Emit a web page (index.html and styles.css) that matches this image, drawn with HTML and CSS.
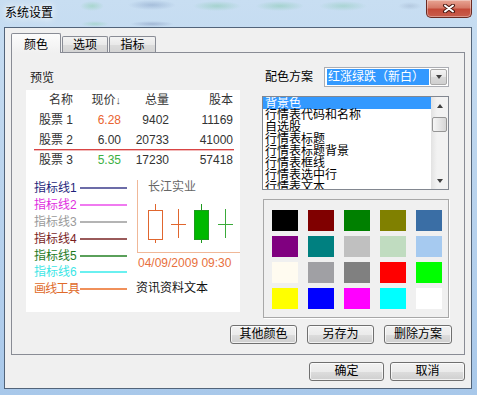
FILE: index.html
```html
<!DOCTYPE html>
<html lang="zh-CN">
<head>
    <meta charset="UTF-8">
    <title>系统设置</title>
    <link rel="stylesheet" href="styles.css">
</head>
<body>
    <div class="window">
        <div class="titlebar">
            <span class="title">系统设置</span>
            <button class="close" type="button">
                <svg width="14" height="9" viewBox="0 0 14 9">
                    <path d="M3 1.5 L11 7.5 M11 1.5 L3 7.5" stroke="#4a1810" stroke-width="4" stroke-linecap="round"/>
                    <path d="M3 1.5 L11 7.5 M11 1.5 L3 7.5" stroke="#fff" stroke-width="2" stroke-linecap="round"/>
                </svg>
            </button>
        </div>

        <div class="client">
            <div class="tabs">
                <div class="tab active">颜色</div>
                <div class="tab">选项</div>
                <div class="tab tab-last">指标</div>
            </div>

            <div class="panel">
                <div class="panel-body">
                    <!-- 左侧预览 -->
                    <div class="preview-col">
                        <div class="group-label">预览</div>
                        <div class="preview">
                            <div class="quote">
                                <span>名称</span><span>现价<span class="sort">↓</span></span><span>总量</span><span>股本</span>
                            </div>
                            <div class="quote">
                                <span>股票 1</span><span class="up">6.28</span><span>9402</span><span>11169</span>
                            </div>
                            <div class="quote tight">
                                <span>股票 2</span><span>6.00</span><span>20733</span><span>41000</span>
                            </div>
                            <div class="sep"></div>
                            <div class="quote">
                                <span>股票 3</span><span class="down">5.35</span><span>17230</span><span>57418</span>
                            </div>

                            <div class="lower">
                                <div class="ind-list">
                                    <span class="ind-name ind1">指标线1</span><span class="ind-line ind1"></span>
                                    <span class="ind-name ind2">指标线2</span><span class="ind-line ind2"></span>
                                    <span class="ind-name ind3">指标线3</span><span class="ind-line ind3"></span>
                                    <span class="ind-name ind4">指标线4</span><span class="ind-line ind4"></span>
                                    <span class="ind-name ind5">指标线5</span><span class="ind-line ind5"></span>
                                    <span class="ind-name ind6">指标线6</span><span class="ind-line ind6"></span>
                                    <span class="ind-name ind7 narrow">画线工具</span><span class="ind-line ind7"></span>
                                </div>
                                <div class="chart">
                                    <div class="axis">
                                        <div class="chart-title">长江实业</div>
                                        <svg class="candles" width="102" height="58" viewBox="0 0 102 58">
                                            <g stroke="#e0662e" fill="none">
                                                <line x1="17.5" y1="10" x2="17.5" y2="49"/>
                                                <rect x="10.5" y="16.5" width="14" height="29" fill="#fff"/>
                                                <line x1="40.5" y1="15" x2="40.5" y2="44"/>
                                                <line x1="33" y1="30.5" x2="48" y2="30.5"/>
                                            </g>
                                            <g stroke="#1e9a1e">
                                                <line x1="63.5" y1="10" x2="63.5" y2="49"/>
                                                <rect x="56.5" y="16.5" width="14" height="29" fill="#00b800"/>
                                                <line x1="87.5" y1="15" x2="87.5" y2="44" stroke="#3aaa3a"/>
                                                <line x1="80" y1="30.5" x2="95" y2="30.5" stroke="#3aaa3a"/>
                                            </g>
                                        </svg>
                                    </div>
                                    <div class="date">04/09/2009 09:30</div>
                                    <div class="news">资讯资料文本</div>
                                </div>
                            </div>
                        </div>
                    </div>

                    <!-- 右侧配色方案 -->
                    <div class="scheme-col">
                        <div class="scheme-row">
                            <span class="scheme-label">配色方案</span>
                            <div class="combo">
                                <span class="combo-value">红涨绿跌（新白）</span>
                                <span class="combo-btn"><i class="arrow-down"></i></span>
                            </div>
                        </div>

                        <div class="listbox">
                            <div class="items">
                                <div class="item sel">背景色</div>
                                <div class="item">行情表代码和名称</div>
                                <div class="item">自选股</div>
                                <div class="item">行情表标题</div>
                                <div class="item">行情表标题背景</div>
                                <div class="item">行情表框线</div>
                                <div class="item">行情表选中行</div>
                                <div class="item">行情表文本</div>
                            </div>
                            <div class="vscroll">
                                <span class="sb-btn"><i class="arrow-up"></i></span>
                                <span class="thumb"></span>
                                <span class="sb-space"></span>
                                <span class="sb-btn"><i class="arrow-down"></i></span>
                            </div>
                        </div>

                        <div class="palette">
                            <span class="swatch" style="background:#000000"></span>
                            <span class="swatch" style="background:#800000"></span>
                            <span class="swatch" style="background:#008000"></span>
                            <span class="swatch" style="background:#808000"></span>
                            <span class="swatch" style="background:#3a6ea5"></span>
                            <span class="swatch" style="background:#800080"></span>
                            <span class="swatch" style="background:#008080"></span>
                            <span class="swatch" style="background:#c0c0c0"></span>
                            <span class="swatch" style="background:#c0dcc0"></span>
                            <span class="swatch" style="background:#a6caf0"></span>
                            <span class="swatch" style="background:#fffbf0"></span>
                            <span class="swatch" style="background:#a0a0a4"></span>
                            <span class="swatch" style="background:#808080"></span>
                            <span class="swatch" style="background:#ff0000"></span>
                            <span class="swatch" style="background:#00ff00"></span>
                            <span class="swatch" style="background:#ffff00"></span>
                            <span class="swatch" style="background:#0000ff"></span>
                            <span class="swatch" style="background:#ff00ff"></span>
                            <span class="swatch" style="background:#00ffff"></span>
                            <span class="swatch" style="background:#ffffff"></span>
                        </div>
                    </div>
                </div>

                <div class="panel-buttons">
                    <button class="btn w-a" type="button">其他颜色</button>
                    <button class="btn w-b" type="button">另存为</button>
                    <button class="btn w-c" type="button">删除方案</button>
                </div>
            </div>

            <div class="dialog-buttons">
                <button class="btn w-d" type="button">确定</button>
                <button class="btn w-d" type="button">取消</button>
            </div>
        </div>
    </div>
</body>
</html>
```

FILE: styles.css
```css
* {
    box-sizing: border-box;
}

body {
    margin: 0;
    width: 477px;
    height: 395px;
    overflow: hidden;
    font-family: "Liberation Sans", "Noto Sans CJK SC", sans-serif;
    font-size: 12px;
    color: #1a1a1a;
    background: linear-gradient(to bottom, #c8def2, #bcd5ee 40%, #b0cdec 80%, #a8c8ea);
}

.window {
    height: 395px;
    display: flex;
    flex-direction: column;
}

/* 标题栏 (玻璃效果) */
.titlebar {
    flex: none;
    height: 27px;
    display: flex;
    align-items: flex-start;
    padding: 0 5px;
    background:
        radial-gradient(ellipse 12px 5px at 92px 6px, rgba(110, 200, 140, 0.35), transparent),
        radial-gradient(ellipse 24px 5px at 152px 5px, rgba(80, 110, 160, 0.28), transparent),
        radial-gradient(ellipse 24px 5px at 217px 6px, rgba(100, 190, 140, 0.35), transparent),
        radial-gradient(ellipse 24px 5px at 280px 6px, rgba(100, 190, 140, 0.35), transparent),
        radial-gradient(ellipse 24px 5px at 343px 6px, rgba(100, 190, 140, 0.3), transparent),
        radial-gradient(ellipse 12px 4px at 410px 6px, rgba(110, 130, 160, 0.22), transparent),
        radial-gradient(ellipse 14px 3px at 95px 24px, rgba(110, 200, 140, 0.3), transparent),
        radial-gradient(ellipse 22px 3px at 152px 24px, rgba(80, 100, 150, 0.3), transparent);
}

.title {
    margin-top: 6px;
    line-height: 14px;
    color: #000;
    text-shadow: 0 0 6px #fff, 0 0 10px rgba(255, 255, 255, 0.9);
}

.close {
    margin-left: auto;
    width: 46px;
    height: 18px;
    padding: 0;
    display: flex;
    align-items: center;
    justify-content: center;
    border: 1px solid #6a2a22;
    border-top: none;
    border-radius: 0 0 5px 5px;
    background: linear-gradient(to bottom, #e8a594 0%, #d67a68 45%, #c44a38 55%, #c85d4c 100%);
    box-shadow: inset 0 0 0 1px rgba(255, 255, 255, 0.35);
}

/* 客户区 */
.client {
    flex: none;
    height: 362px;
    margin: 0 5px 0 4px;
    padding: 5px 6px 0 6px;
    border: 1px solid #52647a;
    background: #f0f0f0;
}

.tabs {
    display: flex;
    align-items: flex-end;
    height: 19px;
}

.tab {
    width: 46px;
    height: 16px;
    margin-left: 1px;
    padding-top: 1px;
    line-height: 14px;
    text-align: center;
    color: #000;
    border: 1px solid #898c95;
    border-bottom: none;
    border-radius: 2px 2px 0 0;
    background: linear-gradient(to bottom, #f3f3f3, #e9e9e9 50%, #dcdcdc 51%, #d4d4d4);
}

.tab-last {
    width: 47px;
}

.tab.active {
    position: relative;
    z-index: 1;
    width: 50px;
    height: 20px;
    margin-left: 0;
    margin-bottom: -1px;
    padding-top: 4px;
    background: linear-gradient(to bottom, #fcfcfc, #f0f0f0);
}

.tab.active + .tab {
    margin-left: 1px;
}

.panel {
    width: 454px;
    height: 303px;
    padding: 0 12px 0 14px;
    border: 1px solid #898c95;
    background: #f0f0f0;
}

.panel-body {
    display: flex;
    height: 264px;
}

/* 预览 */
.preview-col {
    width: 214px;
    flex: none;
}

.group-label {
    margin: 18px 0 5px 4px;
    line-height: 14px;
}

.preview {
    height: 222px;
    background: #fff;
    color: #333;
}

.quote {
    display: grid;
    grid-template-columns: 47px 48px 48px 64px;
    height: 20px;
    align-items: center;
    text-align: right;
    line-height: 14px;
}

.quote.tight {
    height: 19px;
}

.sort {
    font-size: 11px;
    color: #555;
}

.up {
    color: #ea6430;
}

.down {
    color: #3cb043;
}

.sep {
    height: 1px;
    margin: 0 6px 0 8px;
    background: #d94444;
    box-shadow: 0 1px 0 rgba(230, 120, 120, 0.5);
}

.lower {
    display: flex;
    margin-top: 10px;
    padding-left: 8px;
}

.ind-list {
    display: grid;
    grid-template-columns: 46px 47px;
    grid-auto-rows: 16.8px;
    align-items: center;
}

.ind-name {
    white-space: nowrap;
    line-height: 14px;
}

.ind-name.narrow {
    letter-spacing: -0.7px;
}

.ind-line {
    height: 2px;
}

.ind-name.ind1 { color: #1f1f7a; }
.ind-line.ind1 { background: #6c6ca8; }
.ind-name.ind2 { color: #e02ee0; }
.ind-line.ind2 { background: #f07af0; }
.ind-name.ind3 { color: #9a9a9a; }
.ind-line.ind3 { background: #b4b4b4; }
.ind-name.ind4 { color: #7a1e1e; }
.ind-line.ind4 { background: #9a5a5a; }
.ind-name.ind5 { color: #1e7a1e; }
.ind-line.ind5 { background: #5aa05a; }
.ind-name.ind6 { color: #3ce6e6; }
.ind-line.ind6 { background: #6af0f0; }
.ind-name.ind7 { color: #e06a2a; }
.ind-line.ind7 { background: #f0905a; }

.chart {
    width: 103px;
    margin-left: 10px;
}

.axis {
    height: 73px;
    border-left: 1px solid #f0b898;
    border-bottom: 1px solid #f0b898;
}

.chart-title {
    padding-left: 10px;
    line-height: 14px;
    color: #666;
}

.candles {
    display: block;
}

.date {
    margin-top: 2px;
    padding-left: 1px;
    line-height: 16px;
    color: #e8703c;
}

.news {
    margin: 9px 0 0 -1px;
    line-height: 17px;
    color: #111;
}

/* 配色方案 */
.scheme-col {
    width: 187px;
    margin-left: 22px;
    padding-top: 14px;
}

.scheme-row {
    display: flex;
    align-items: center;
    height: 20px;
}

.scheme-label {
    margin-left: 3px;
    line-height: 14px;
    color: #000;
}

.combo {
    display: flex;
    width: 125px;
    height: 20px;
    margin-left: auto;
    padding: 1px 1px 1px 2px;
    border: 1px solid #abadb3;
    background: #fff;
}

.combo-value {
    flex: 1;
    padding-left: 1px;
    line-height: 16px;
    white-space: nowrap;
    overflow: hidden;
    color: #fff;
    background: #3399ff;
}

.combo-btn {
    width: 17px;
    margin-left: 1px;
    display: flex;
    align-items: center;
    justify-content: center;
    border: 1px solid #a9a9a9;
    border-radius: 2px;
    background: linear-gradient(to bottom, #f4f4f4, #e6e6e6 50%, #d8d8d8 51%, #d0d0d0);
}

.arrow-down {
    width: 0;
    height: 0;
    border-left: 3.5px solid transparent;
    border-right: 3.5px solid transparent;
    border-top: 4px solid #404040;
}

.arrow-up {
    width: 0;
    height: 0;
    border-left: 3.5px solid transparent;
    border-right: 3.5px solid transparent;
    border-bottom: 4px solid #404040;
}

.listbox {
    display: flex;
    height: 94px;
    margin-top: 9px;
    border: 1px solid #828790;
    background: #fff;
}

.items {
    flex: 1;
    overflow: hidden;
}

.item {
    height: 12px;
    padding-left: 2px;
    line-height: 12px;
    white-space: nowrap;
    color: #000;
}

.item.sel {
    color: #fff;
    background: #3399ff;
}

.vscroll {
    width: 17px;
    display: flex;
    flex-direction: column;
    background: linear-gradient(to right, #e2e2e2, #f2f2f2 35%, #f2f2f2);
}

.sb-btn {
    height: 17px;
    display: flex;
    align-items: center;
    justify-content: center;
}

.thumb {
    height: 15px;
    margin: 3px 1px 0;
    border: 1px solid #959595;
    border-radius: 2px;
    background: linear-gradient(to right, #f6f6f6, #e6e6e6 50%, #d6d6d6);
}

.sb-space {
    flex: 1;
}

.palette {
    display: grid;
    grid-template-columns: repeat(5, 26px);
    grid-auto-rows: 21px;
    column-gap: 10px;
    row-gap: 5px;
    align-content: start;
    width: 186px;
    height: 119px;
    margin: 9px 0 0 1px;
    padding: 10px 0 0 8px;
    border: 1px solid #a8a8a8;
    box-shadow: 1px 1px 0 #fff;
}

.swatch {
    display: block;
}

/* 按钮 */
.btn {
    height: 19px;
    padding: 0;
    font: inherit;
    line-height: 15px;
    color: #000;
    border: 1px solid #707070;
    border-radius: 3px;
    background: linear-gradient(to bottom, #f2f2f2 0%, #ebebeb 50%, #dddddd 51%, #cfcfcf 100%);
    box-shadow: inset 0 0 0 1px rgba(255, 255, 255, 0.7);
}

.panel-buttons {
    display: flex;
    justify-content: flex-end;
    gap: 10px;
    margin-top: 8px;
}

.w-a { width: 67px; }
.w-b { width: 67px; }
.w-c { width: 68px; }
.w-d { width: 75px; }

.dialog-buttons {
    display: flex;
    justify-content: flex-end;
    gap: 6px;
    margin-top: 7px;
}
```
